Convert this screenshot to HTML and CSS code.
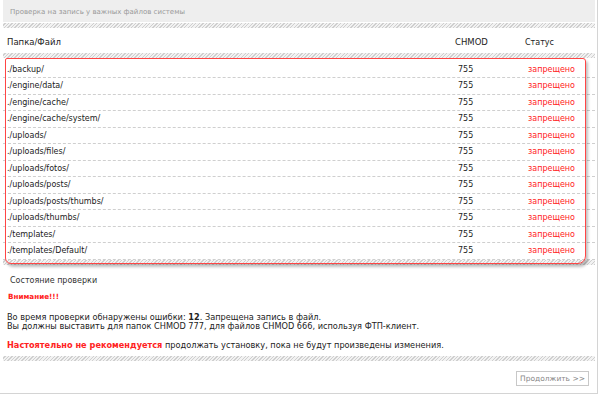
FILE: index.html
```html
<!DOCTYPE html>
<html lang="ru">
<head>
    <meta charset="UTF-8">
    <meta name="viewport" content="width=device-width, initial-scale=1.0">
    <title>Проверка на запись</title>
    <link rel="stylesheet" href="styles.css">
</head>
<body>
    <div class="page">
        <div class="title">Проверка на запись у важных файлов системы</div>
        <div class="hatch"></div>
        <div class="row head">
            <span>Папка/Файл</span>
            <span class="chmod">CHMOD</span>
            <span class="status">Статус</span>
        </div>
        <div class="hatch"></div>
        <div class="files">
            <div class="row"><span>./backup/</span><span class="chmod">755</span><span class="status deny">запрещено</span></div>
            <div class="row"><span>./engine/data/</span><span class="chmod">755</span><span class="status deny">запрещено</span></div>
            <div class="row"><span>./engine/cache/</span><span class="chmod">755</span><span class="status deny">запрещено</span></div>
            <div class="row"><span>./engine/cache/system/</span><span class="chmod">755</span><span class="status deny">запрещено</span></div>
            <div class="row"><span>./uploads/</span><span class="chmod">755</span><span class="status deny">запрещено</span></div>
            <div class="row"><span>./uploads/files/</span><span class="chmod">755</span><span class="status deny">запрещено</span></div>
            <div class="row"><span>./uploads/fotos/</span><span class="chmod">755</span><span class="status deny">запрещено</span></div>
            <div class="row"><span>./uploads/posts/</span><span class="chmod">755</span><span class="status deny">запрещено</span></div>
            <div class="row"><span>./uploads/posts/thumbs/</span><span class="chmod">755</span><span class="status deny">запрещено</span></div>
            <div class="row"><span>./uploads/thumbs/</span><span class="chmod">755</span><span class="status deny">запрещено</span></div>
            <div class="row"><span>./templates/</span><span class="chmod">755</span><span class="status deny">запрещено</span></div>
            <div class="row"><span>./templates/Default/</span><span class="chmod">755</span><span class="status deny">запрещено</span></div>
            <div class="mark"></div>
        </div>
        <div class="hatch"></div>
        <div class="section">Состояние проверки</div>
        <div class="warn">Внимание!!!</div>
        <p class="info">Во время проверки обнаружены ошибки: <b>12</b>. Запрещена запись в файл.<br>
        Вы должны выставить для папок CHMOD 777, для файлов CHMOD 666, используя ФТП-клиент.<br><br>
        <b class="red">Настоятельно не рекомендуется</b> продолжать установку, пока не будут произведены изменения.</p>
        <div class="hatch"></div>
        <div class="actions">
            <button type="button" class="next">Продолжить &gt;&gt;</button>
        </div>
    </div>
</body>
</html>
```

FILE: styles.css
```css
body {
    margin: 0;
    font-family: "DejaVu Sans", Verdana, sans-serif;
    color: #222;
    background: #fff;
}
.page {
    width: 598px;
    height: 394px;
    box-sizing: border-box;
    padding: 0 2px 0 3px;
    border-right: 1px solid #d4d4d4;
    border-bottom: 1px solid #d4d4d4;
}
.title {
    height: 22px;
    line-height: 24px;
    padding-left: 7px;
    background: #eeeeee;
    color: #999;
    font-size: 7px;
    margin-bottom: 1px;
}
.hatch {
    height: 5px;
    background: repeating-linear-gradient(-45deg, #cfcfcf 0, #cfcfcf 1px, #f2f2f2 1px, #f2f2f2 2.5px);
}
.row {
    display: grid;
    grid-template-columns: 1fr 73px 70px;
    height: 15.5px;
    line-height: 16px;
    padding-left: 4px;
    border-bottom: 1px dashed #cfcfcf;
    font-size: 8px;
}
.row .chmod {
    padding-left: 6px;
}
.row .status {
    padding-left: 3px;
}
.row.head {
    height: 25px;
    line-height: 29px;
    border-bottom: none;
    font-size: 8.5px;
}
.row.head .chmod {
    padding-left: 3px;
}
.row.head .status {
    padding-left: 0;
    font-size: 8px;
}
.files {
    position: relative;
    padding-top: 3.5px;
}
.deny {
    color: #f22;
}
.mark {
    position: absolute;
    left: 2px;
    top: 0;
    width: 579px;
    height: 204px;
    border: 1.5px solid #ff4545;
    border-radius: 2px 3px 8px 6px;
    box-shadow: 2px 3px 3px rgba(0, 0, 0, 0.25);
}
.section {
    margin: 11px 0 0 7px;
    font-size: 8px;
    color: #333;
}
.warn {
    margin: 7px 0 0 5px;
    color: #f22;
    font-size: 7.2px;
    font-weight: bold;
}
.info {
    margin: 12px 0 5px 4px;
    font-size: 8.2px;
    line-height: 9.5px;
}
.red {
    color: #f22;
}
.actions {
    display: flex;
    justify-content: flex-end;
    padding: 10px 6px 0 0;
}
.next {
    height: 15px;
    padding: 0 3px;
    font-family: inherit;
    font-size: 7.5px;
    color: #888;
    background: #fff;
    border: 1px solid #c8c8c8;
}
```
